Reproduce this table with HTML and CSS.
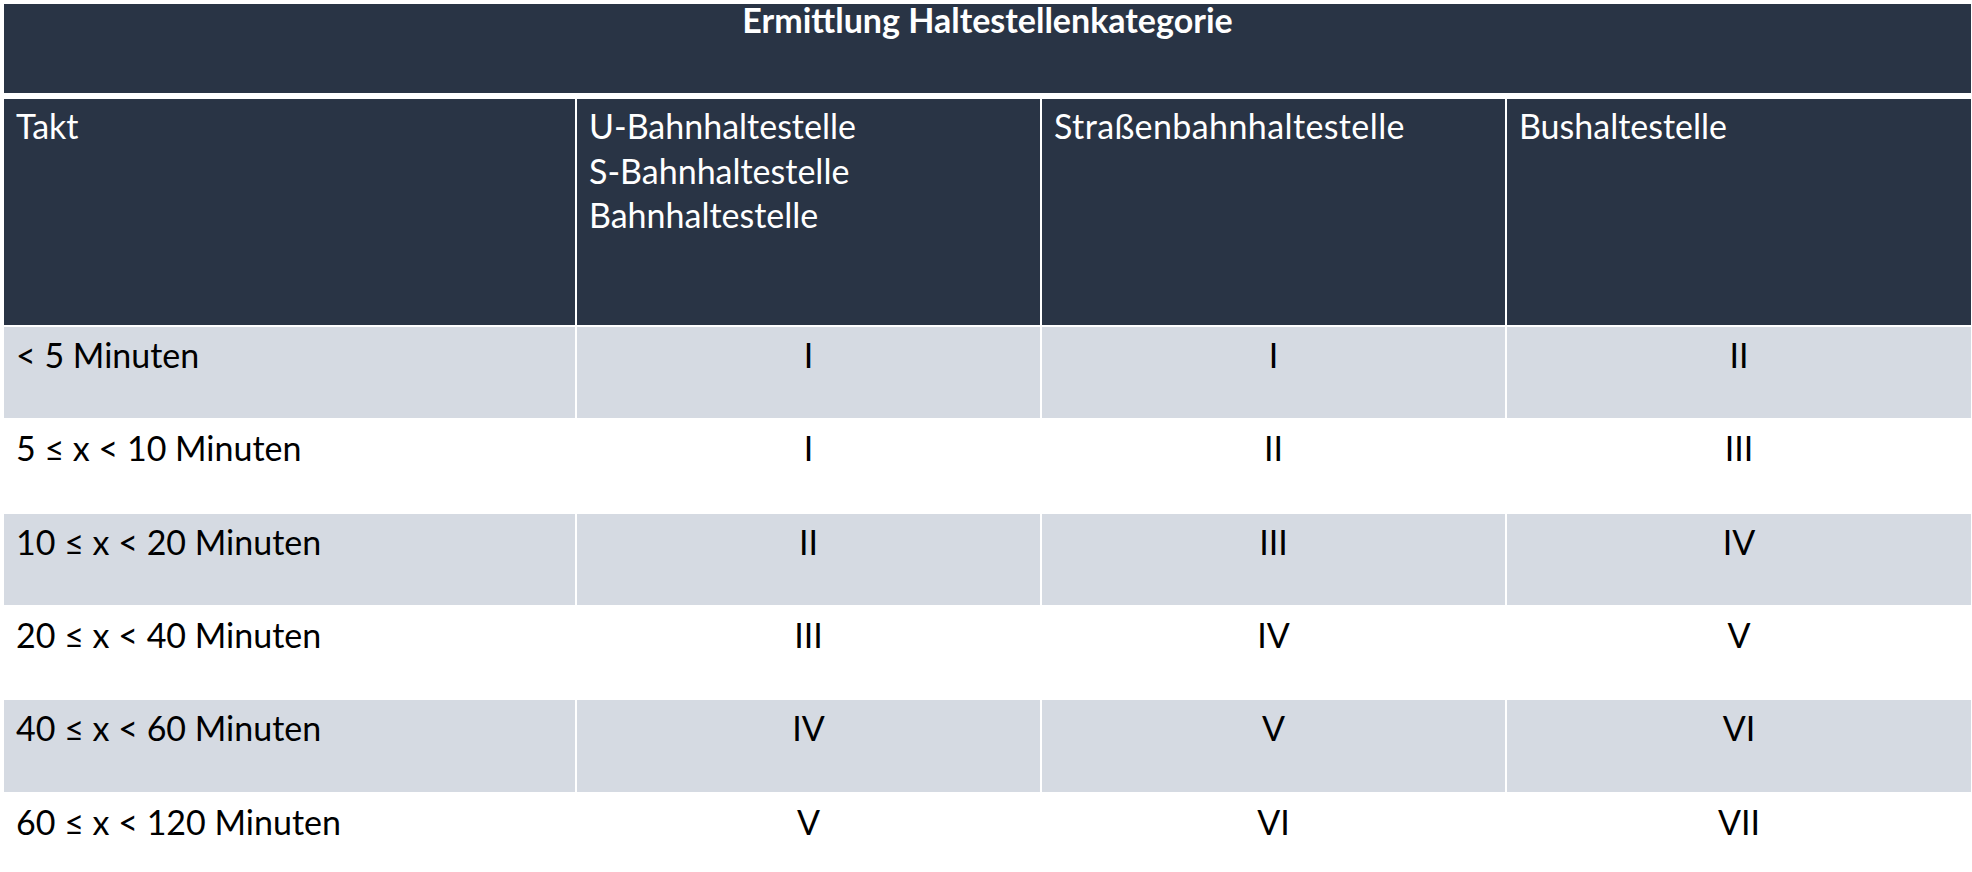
FILE: index.html
```html
<!DOCTYPE html>
<html lang="de">
<head>
<meta charset="utf-8">
<title>Ermittlung Haltestellenkategorie</title>
<link rel="stylesheet" href="styles.css">
</head>
<body>
<div class="sheet">
  <div class="title">Ermittlung Haltestellenkategorie</div>
  <table class="grid">
    <colgroup>
      <col class="c1"><col class="c2"><col class="c3"><col class="c4">
    </colgroup>
    <thead>
      <tr class="head">
        <th>Takt</th>
        <th>U-Bahnhaltestelle<br>S-Bahnhaltestelle<br>Bahnhaltestelle</th>
        <th class="wide">Straßenbahnhaltestelle</th>
        <th>Bushaltestelle</th>
      </tr>
    </thead>
    <tbody>
      <tr class="r shade h93"><td>&lt; 5 Minuten</td><td class="n">I</td><td class="n">I</td><td class="n">II</td></tr>
      <tr class="r h94"><td>5 ≤ x &lt; 10 Minuten</td><td class="n">I</td><td class="n">II</td><td class="n">III</td></tr>
      <tr class="r shade h93"><td>10 ≤ x &lt; 20 Minuten</td><td class="n">II</td><td class="n">III</td><td class="n">IV</td></tr>
      <tr class="r h93"><td>20 ≤ x &lt; 40 Minuten</td><td class="n">III</td><td class="n">IV</td><td class="n">V</td></tr>
      <tr class="r shade h94"><td>40 ≤ x &lt; 60 Minuten</td><td class="n">IV</td><td class="n">V</td><td class="n">VI</td></tr>
      <tr class="r h94"><td>60 ≤ x &lt; 120 Minuten</td><td class="n">V</td><td class="n">VI</td><td class="n">VII</td></tr>
    </tbody>
  </table>
</div>
</body>
</html>
```

FILE: styles.css
```css
html, body {
  margin: 0;
  padding: 0;
  background: #ffffff;
}

body {
  font-family: "Lato", "Open Sans", sans-serif;
}

.sheet {
  padding: 4px 1px 0 4px;
  width: 1967px;
}

.title {
  height: 89px;
  background: #293445;
  color: #ffffff;
  font-weight: 700;
  font-size: 34px;
  line-height: 32px;
  text-align: center;
  box-sizing: border-box;
  padding-top: 0;
}

.grid {
  margin-top: 4px;
  width: 1967px;
  table-layout: fixed;
  border-collapse: separate;
  border-spacing: 0;
}

.c1 { width: 571px; }
.c2 { width: 465px; }
.c3 { width: 465px; }
.c4 { width: 466px; }

.grid th,
.grid td {
  border-top: 2px solid #ffffff;
  vertical-align: top;
  text-align: left;
  font-size: 34px;
  line-height: 44.5px;
  padding: 0 12px;
  overflow: hidden;
  white-space: nowrap;
}

.grid th + th,
.grid td + td {
  border-left: 2px solid #ffffff;
}

.head {
  height: 228px;
}

.head th {
  background: #293445;
  color: #ffffff;
  font-weight: 400;
  padding-top: 5px;
}

.head th.wide {
  letter-spacing: 0.4px;
}

.r td {
  color: #000000;
  padding-top: 6px;
}

.shade td {
  background: #d5dae2;
}

.h93 { height: 93px; }
.h94 { height: 94px; }

.grid td.n {
  text-align: center;
  padding-left: 0;
  padding-right: 0;
}
```
